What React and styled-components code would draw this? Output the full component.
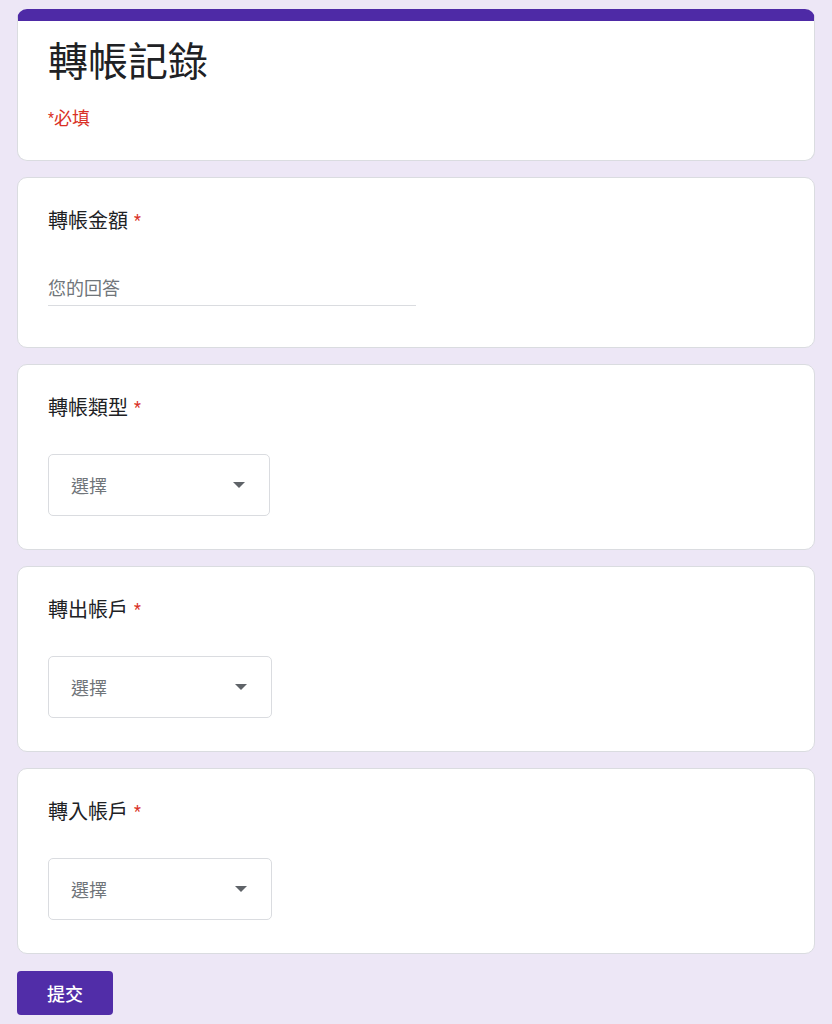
import styled, { createGlobalStyle } from 'styled-components';

const GlobalStyle = createGlobalStyle`
	html, body {
		margin: 0;
		padding: 0;
		background: #ede7f6;
	}
	body {
		font-family: Roboto, "Noto Sans CJK TC", "Noto Sans", sans-serif;
		color: #202124;
	}
`;

const Page = styled.div`
	display: flex;
	flex-direction: column;
	gap: 16px;
	padding: 9px 17px 10px 17px;
`;

const Card = styled.div`
	background: #fff;
	border: 1px solid #dadce0;
	border-radius: 10px;
	padding: ${({ $header }) => ($header ? '18px 30px 29px' : '31px 30px 33px')};
	${({ $header }) => $header && 'border-top: 12px solid #4e2aa6;'}
`;

const Title = styled.h1`
	margin: 0;
	font-size: 40px;
	line-height: 48px;
	font-weight: 400;
	color: #202124;
`;

const RequiredNote = styled.div`
	margin-top: 20px;
	font-size: 18px;
	line-height: 24px;
	color: #d93025;

	small {
		font-size: 14px;
		line-height: 0;
		vertical-align: 2px;
	}
`;

const Label = styled.div`
	font-size: 20px;
	line-height: 24px;
	color: #202124;

	span {
		color: #d93025;
		margin-left: 6px;
		font-size: 16px;
		line-height: 0;
		vertical-align: 2px;
	}
`;

const TextInput = styled.input`
	display: block;
	width: 368px;
	margin-top: 44px;
	margin-bottom: 8px;
	padding: 0 0 4px;
	border: none;
	border-bottom: 1px solid #dadce0;
	font: inherit;
	font-size: 18px;
	line-height: 24px;
	outline: none;
	background: transparent;

	&::placeholder {
		color: #70757a;
	}
`;

const Select = styled.div`
	display: flex;
	align-items: center;
	justify-content: space-between;
	box-sizing: border-box;
	width: ${({ $width }) => $width}px;
	height: 62px;
	margin-top: 34px;
	padding: 0 24px 0 22px;
	border: 1px solid #dadce0;
	border-radius: 5px;
	font-size: 18px;
	color: #70757a;
`;

const Arrow = styled.div`
	width: 0;
	height: 0;
	border-left: 6px solid transparent;
	border-right: 6px solid transparent;
	border-top: 6px solid #5f6368;
`;

const SubmitButton = styled.button`
	align-self: flex-start;
	height: 44px;
	margin-top: 1px;
	padding: 0 30px;
	border: none;
	border-radius: 4px;
	background: #512da8;
	color: #fff;
	font: inherit;
	font-size: 18px;
	font-weight: 500;
	cursor: pointer;
`;

const questions = [
	{ label: '轉帳類型', width: 222 },
	{ label: '轉出帳戶', width: 224 },
	{ label: '轉入帳戶', width: 224 },
];

export default function App() {
	return (
		<>
			<GlobalStyle />
			<Page>
				<Card $header>
					<Title>轉帳記錄</Title>
					<RequiredNote>
						<small>*</small>必填
					</RequiredNote>
				</Card>
				<Card>
					<Label>
						轉帳金額<span>*</span>
					</Label>
					<TextInput placeholder="您的回答" />
				</Card>
				{questions.map((q) => (
					<Card key={q.label}>
						<Label>
							{q.label}
							<span>*</span>
						</Label>
						<Select $width={q.width}>
							選擇
							<Arrow />
						</Select>
					</Card>
				))}
				<SubmitButton>提交</SubmitButton>
			</Page>
		</>
	);
}
